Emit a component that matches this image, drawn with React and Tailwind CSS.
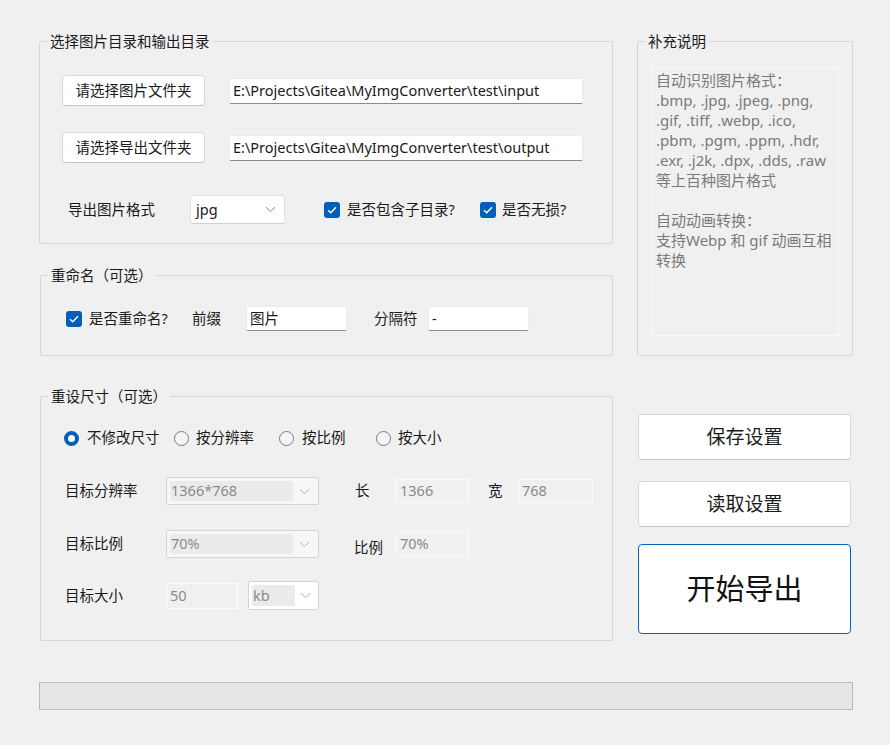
import React from "react";

const FONT = { fontFamily: '"Segoe UI", "Noto Sans", "Noto Sans CJK SC", sans-serif' };

function Group({ title, className, children }) {
  return (
    <div className={`relative border border-[#d6d6d6] rounded-[2px] ${className}`}>
      <span className="absolute -top-[11px] left-[7px] px-[3px] bg-[#f0f0f0] text-[14.5px] leading-[20px] text-[#1a1a1a]">
        {title}
      </span>
      {children}
    </div>
  );
}

function Chevron({ color = "#8c8c8c" }) {
  return (
    <svg width="11" height="7" viewBox="0 0 11 7" fill="none">
      <path d="M1 1.2 L5.5 5.5 L10 1.2" stroke={color} strokeWidth="1" />
    </svg>
  );
}

function Check() {
  return (
    <span className="w-[16px] h-[16px] rounded-[3px] bg-[#005fb8] flex items-center justify-center shrink-0">
      <svg width="10" height="8" viewBox="0 0 10 8" fill="none">
        <path d="M1 4.2 L3.7 6.7 L9 1.2" stroke="white" strokeWidth="1.4" />
      </svg>
    </span>
  );
}

function Radio({ checked }) {
  return checked ? (
    <span className="block w-[15px] h-[15px] rounded-full border-[4px] border-[#005fb8] bg-white shrink-0" />
  ) : (
    <span className="block w-[15px] h-[15px] rounded-full border border-[#7a7a7a] bg-[#f5f5f5] shrink-0" />
  );
}

function TextBox({ value, className }) {
  return (
    <div
      className={`bg-white border border-[#ececec] border-b-[#8a8a8a] rounded-[2px] flex items-center pl-[3px] text-[#1a1a1a] ${className}`}
    >
      {value}
    </div>
  );
}

function DisabledBox({ value, className }) {
  return (
    <div
      className={`bg-[#f0f0f0] border border-[#fbfbfb] flex items-center pl-[3px] text-[#8a8a8a] ${className}`}
    >
      {value}
    </div>
  );
}

function DisabledSelect({ value, className }) {
  return (
    <div className={`border border-[#d4d4d4] bg-[#f7f7f7] rounded-[2px] flex items-stretch p-[3px] ${className}`}>
      <span className="flex-1 bg-[#ebebeb] flex items-center pl-[1px] text-[#8a8a8a]">{value}</span>
      <span className="w-[22px] flex items-center justify-center">
        <Chevron color="#b5b5b5" />
      </span>
    </div>
  );
}

function Button({ children, className }) {
  return (
    <button
      className={`bg-white border border-[#d9d9d9] border-b-[#c4c4c4] rounded-[4px] text-[#1a1a1a] ${className}`}
    >
      {children}
    </button>
  );
}

export default function App() {
  return (
    <div style={FONT} className="w-[890px] h-[745px] bg-[#f0f0f0] pt-[41px] pl-[39px] text-[14.5px] text-[#1a1a1a]">
      <div className="flex items-start gap-[24px]">
        {/* left column */}
        <div className="w-[574px] flex flex-col">
          <Group title="选择图片目录和输出目录" className="h-[203px] pt-[33px] pl-[22px]">
            <div className="flex items-center h-[31px]">
              <Button className="w-[143px] h-[31px]">请选择图片文件夹</Button>
              <TextBox value="E:\Projects\Gitea\MyImgConverter\test\input" className="ml-[24px] w-[354px] h-[26px]" />
            </div>
            <div className="flex items-center h-[31px] mt-[26px]">
              <Button className="w-[143px] h-[31px]">请选择导出文件夹</Button>
              <TextBox value="E:\Projects\Gitea\MyImgConverter\test\output" className="ml-[24px] w-[354px] h-[26px]" />
            </div>
            <div className="flex items-center h-[29px] mt-[32px]">
              <span className="ml-[6px] w-[122px]">导出图片格式</span>
              <div className="w-[95px] h-[29px] bg-white border border-[#e3e3e3] border-b-[#cfcfcf] rounded-[3px] flex items-center justify-between pl-[5px] pr-[8px]">
                <span>jpg</span>
                <Chevron />
              </div>
              <span className="ml-[39px]">
                <Check />
              </span>
              <span className="ml-[7px] w-[133px]">是否包含子目录?</span>
              <Check />
              <span className="ml-[6px]">是否无损?</span>
            </div>
          </Group>

          <Group title="重命名（可选）" className="ml-[1px] mt-[31px] h-[81px] pt-[30px] pl-[25px]">
            <div className="flex items-center h-[25px]">
              <Check />
              <span className="ml-[7px] w-[103px]">是否重命名?</span>
              <span className="w-[54px]">前缀</span>
              <TextBox value="图片" className="w-[101px] h-[25px]" />
              <span className="ml-[27px] w-[54px]">分隔符</span>
              <TextBox value="-" className="w-[101px] h-[25px]" />
            </div>
          </Group>

          <Group title="重设尺寸（可选）" className="ml-[1px] mt-[40px] h-[245px] pt-[31px] pl-[23px]">
            <div className="flex items-center h-[20px]">
              <Radio checked />
              <span className="ml-[8px] w-[87px]">不修改尺寸</span>
              <Radio />
              <span className="ml-[7px] w-[83px]">按分辨率</span>
              <Radio />
              <span className="ml-[8px] w-[74px]">按比例</span>
              <Radio />
              <span className="ml-[7px]">按大小</span>
            </div>
            <div className="flex items-center h-[28px] mt-[29px]">
              <span className="ml-[1px] w-[101px]">目标分辨率</span>
              <DisabledSelect value="1366*768" className="w-[153px] h-[28px]" />
              <span className="ml-[36px] w-[41px]">长</span>
              <DisabledBox value="1366" className="w-[73px] h-[24px]" />
              <span className="ml-[19px] w-[30px]">宽</span>
              <DisabledBox value="768" className="w-[75px] h-[24px]" />
            </div>
            <div className="flex items-center h-[28px] mt-[25px]">
              <span className="ml-[1px] w-[101px]">目标比例</span>
              <DisabledSelect value="70%" className="w-[153px] h-[28px]" />
              <span className="ml-[35px] w-[42px] pt-[8px]">比例</span>
              <DisabledBox value="70%" className="w-[73px] h-[24px]" />
            </div>
            <div className="flex items-center h-[29px] mt-[23px]">
              <span className="ml-[1px] w-[101px]">目标大小</span>
              <DisabledBox value="50" className="w-[72px] h-[26px]" />
              <div className="ml-[10px] w-[71px] h-[29px] border border-[#d4d4d4] bg-white rounded-[2px] flex items-stretch p-[3px]">
                <span className="flex-1 bg-[#ebebeb] flex items-center pl-[1px] text-[#8a8a8a]">kb</span>
                <span className="w-[20px] flex items-center justify-center">
                  <Chevron color="#b5b5b5" />
                </span>
              </div>
            </div>
          </Group>
        </div>

        {/* right column */}
        <div className="w-[216px] flex flex-col">
          <Group title="补充说明" className="h-[315px] pt-[25px] pl-[13px]">
            <div className="w-[188px] h-[269px] border border-[#fafafa] bg-[#f0f0f0] pt-[2px] pl-[4px] text-[15px] leading-[20px] text-[#7a7a7a] whitespace-nowrap">
              <p>自动识别图片格式：</p>
              <p>.bmp, .jpg, .jpeg, .png,</p>
              <p>.gif, .tiff, .webp, .ico,</p>
              <p>.pbm, .pgm, .ppm, .hdr,</p>
              <p>.exr, .j2k, .dpx, .dds, .raw</p>
              <p>等上百种图片格式</p>
              <p className="h-[20px]"></p>
              <p>自动动画转换：</p>
              <p>支持Webp 和 gif 动画互相</p>
              <p>转换</p>
            </div>
          </Group>
          <Button className="ml-[1px] mt-[58px] w-[213px] h-[46px] text-[19px]">保存设置</Button>
          <Button className="ml-[1px] mt-[21px] w-[213px] h-[46px] text-[19px]">读取设置</Button>
          <button className="ml-[1px] mt-[17px] w-[213px] h-[90px] bg-white border border-[#0067c0] rounded-[4px] text-[29px] text-[#111]">
            开始导出
          </button>
        </div>
      </div>

      <div className="mt-[41px] w-[814px] h-[28px] bg-[#e6e6e6] border border-[#bcbcbc]" />
    </div>
  );
}
